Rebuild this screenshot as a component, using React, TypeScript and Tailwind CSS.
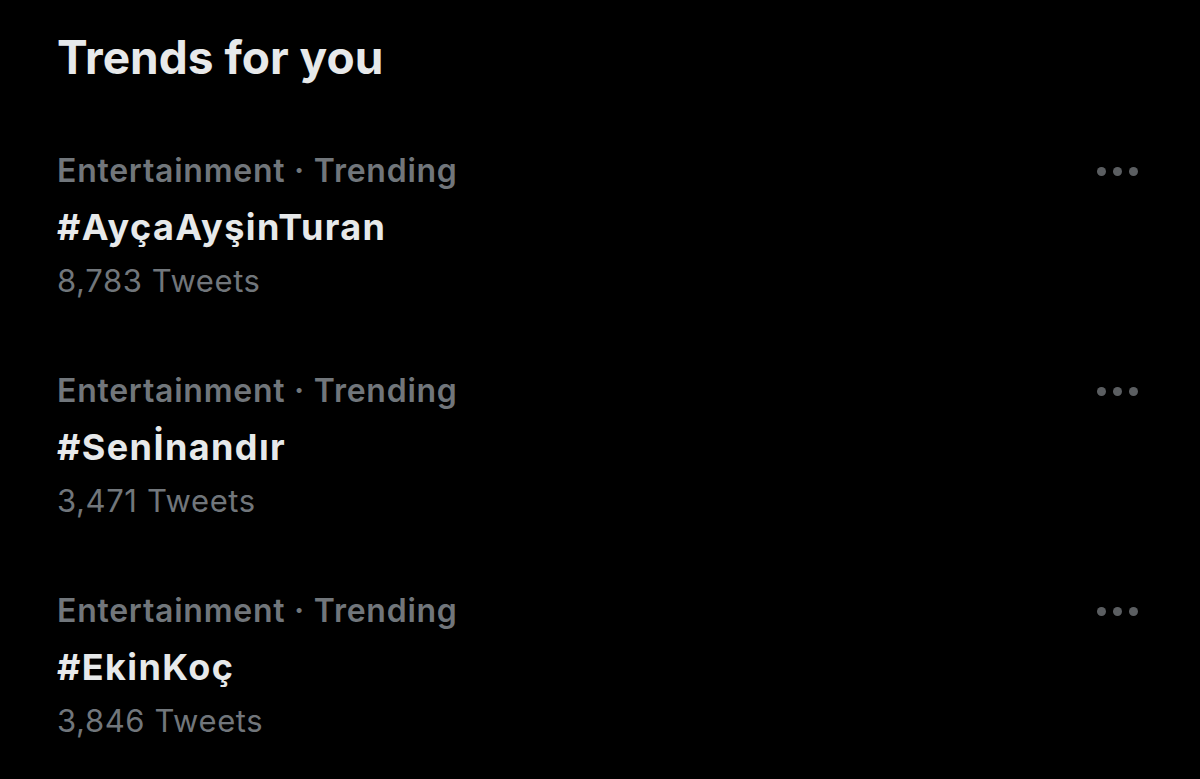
const trends = [
  { category: "Entertainment · Trending", tag: "#AyçaAyşinTuran", count: "8,783 Tweets" },
  { category: "Entertainment · Trending", tag: "#Senİnandır", count: "3,471 Tweets" },
  { category: "Entertainment · Trending", tag: "#EkinKoç", count: "3,846 Tweets" },
];

function MoreDots() {
  return (
    <div className="flex h-[56px] items-center gap-[7px]">
      <span className="h-[9px] w-[9px] rounded-full bg-[#5b5e61]" />
      <span className="h-[9px] w-[9px] rounded-full bg-[#5b5e61]" />
      <span className="h-[9px] w-[9px] rounded-full bg-[#5b5e61]" />
    </div>
  );
}

export default function App() {
  return (
    <div
      className="min-h-screen w-full bg-black pl-[57px] pr-[62px] pt-[29px]"
      style={{ fontFamily: "Inter, 'Noto Sans', sans-serif" }}
    >
      <h1 className="text-[46px] font-bold leading-[56px] text-[#e7e9ea]">
        Trends for you
      </h1>

      <div className="mt-[58px] flex flex-col gap-[56px]">
        {trends.map((t) => (
          <div key={t.tag} className="flex items-start justify-between">
            <div className="flex flex-col">
              <span className="text-[32px] font-semibold leading-[56px] tracking-[0.75px] text-[#71767b]">
                {t.category}
              </span>
              <span className="text-[36px] font-bold leading-[56px] tracking-[1.4px] text-[#e7e9ea]">
                {t.tag}
              </span>
              <span className="text-[31px] font-normal leading-[52px] tracking-[0.6px] text-[#71767b]">
                {t.count}
              </span>
            </div>
            <MoreDots />
          </div>
        ))}
      </div>
    </div>
  );
}
